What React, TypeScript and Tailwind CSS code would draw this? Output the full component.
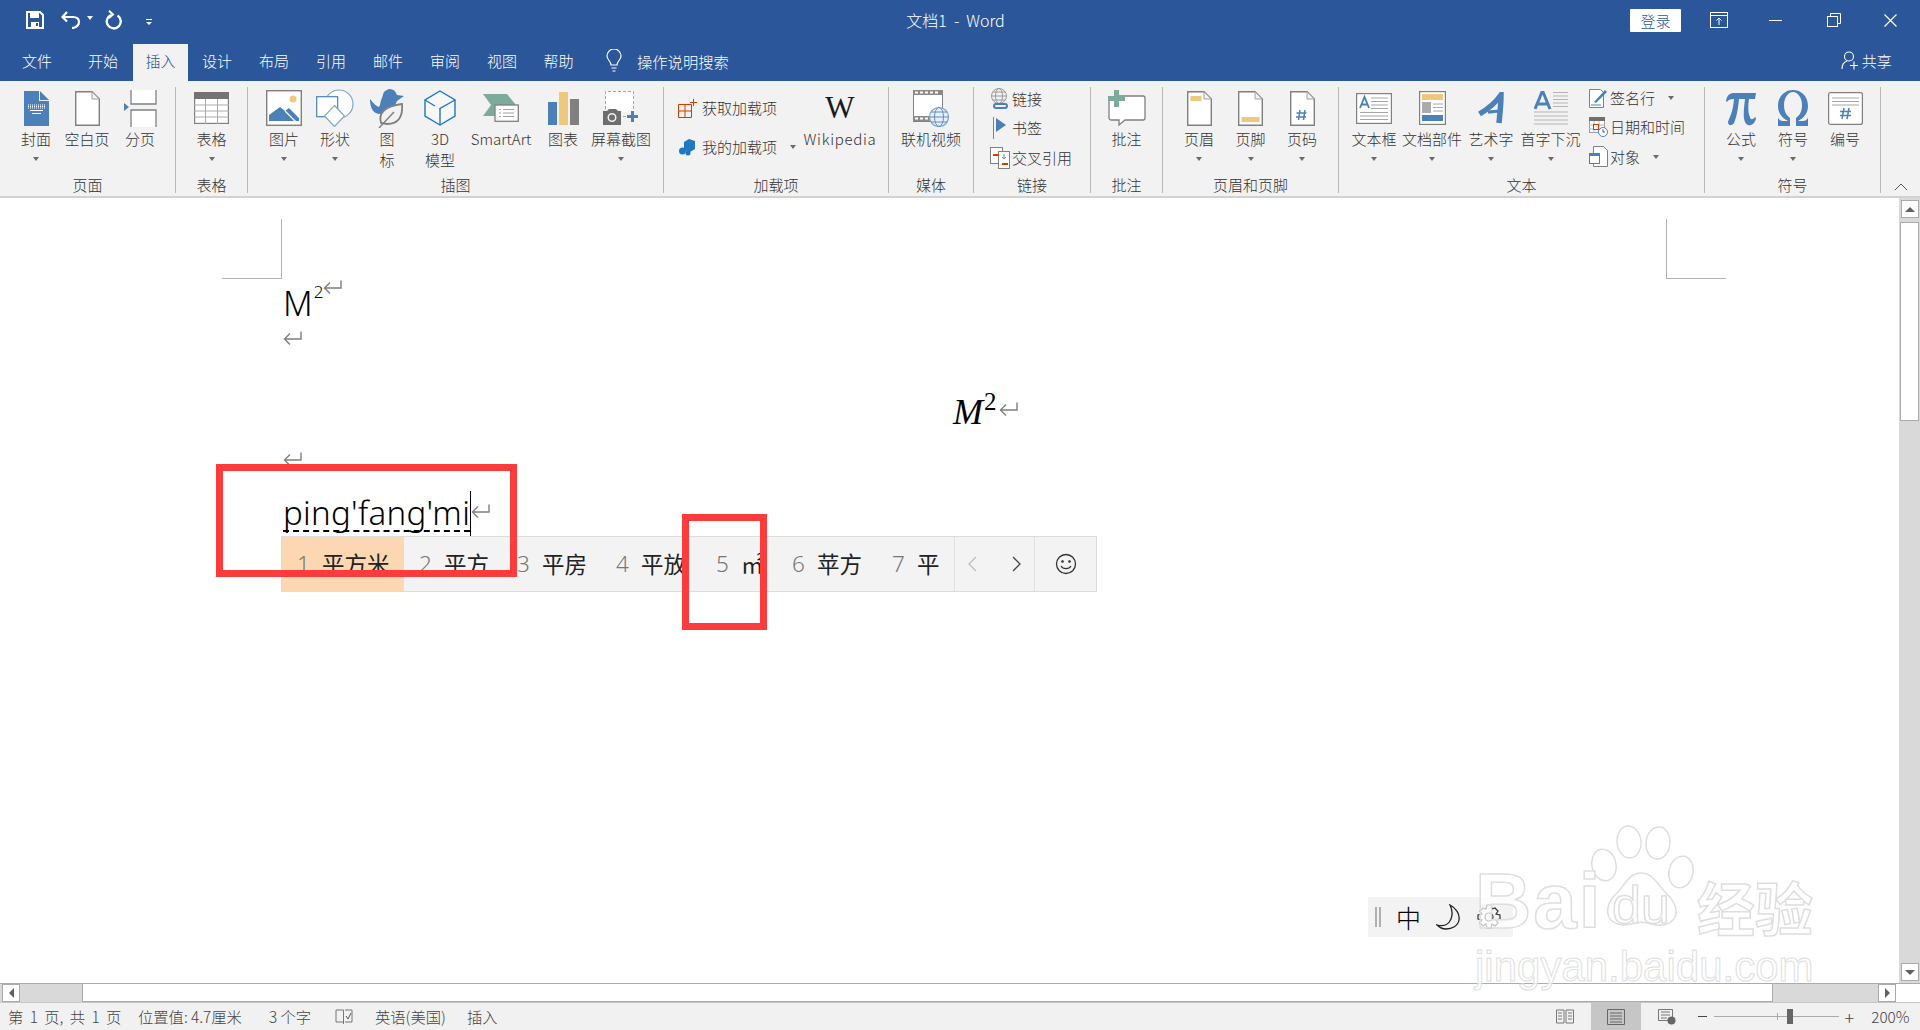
import React from "react";

const BLUE = "#4c80b9";
const TAN = "#edc87e";
const GREY = "#808080";

const Caret = () => <span className="block w-0 h-0 border-l-[3.5px] border-r-[3.5px] border-t-[4px] border-l-transparent border-r-transparent border-t-[#6a6a6a]" />;

// folded page outline used by several ribbon icons
const Page = ({ children }: { children?: React.ReactNode }) => (
  <svg width="25" height="35" viewBox="0 0 25 35">
    <path d="M0.700 0.700h16.300l7.300 7.300v26.300H0.700z" fill="#fff" stroke={GREY} strokeWidth="1.400" />
    <path d="M17 0.700v7.300h7.300z" fill="#f2f2f2" stroke="#a0a0a0" />
    {children}
  </svg>
);

const icons: Record<string, React.ReactNode> = {
  cover: (
    <svg width="25" height="35" viewBox="0 0 25 35">
      <path d="M0 0h15v10h10v25H0z" fill={BLUE} />
      <path d="M16 0l9 9h-9z" fill={BLUE} />
      <path d="M4 14h17M4 15.500h17M4 17h17" stroke="#fff" strokeDasharray="1 1" />
      <path d="M6 19.500h13M8 22.500h9" stroke="#fff" />
    </svg>
  ),
  blank: <Page />,
  pagebreak: (
    <svg width="33" height="37" viewBox="0 0 33 37">
      <path d="M7 0v14h25V0" fill="#fff" stroke={GREY} strokeWidth="1.300" />
      <path d="M7 37V20h25v17" fill="#fff" stroke={GREY} strokeWidth="1.300" />
      <path d="M0 13l5 4-5 4z" fill={BLUE} />
    </svg>
  ),
  table: (
    <svg width="35" height="32" viewBox="0 0 35 32">
      <rect x="0.600" y="0.600" width="33.800" height="30.800" fill="#fff" stroke={GREY} strokeWidth="1.200" />
      <rect x="0" y="0" width="35" height="7" fill="#737373" />
      <path d="M0 13h35M0 19h35M0 25h35M11.500 7v25M23.500 7v25" stroke="#ababab" />
    </svg>
  ),
  picture: (
    <svg width="36" height="36" viewBox="0 0 36 36">
      <rect x="0.700" y="0.700" width="34.600" height="34.600" fill="#fff" stroke={GREY} strokeWidth="1.400" />
      <path d="M3 31V25l11-8 5 4 4-3 10 10v3z" fill={BLUE} />
      <path d="M19 21l11 11" stroke="#fff" strokeWidth="1.200" />
      <circle cx="27" cy="9" r="3.500" fill={TAN} />
    </svg>
  ),
  shapes: (
    <svg width="38" height="38" viewBox="0 0 38 38">
      <circle cx="23" cy="15" r="14" fill="#fff" stroke="#7ea6cf" strokeWidth="1.200" />
      <rect x="0.700" y="7.700" width="21" height="20" fill="#fff" stroke={BLUE} strokeWidth="1.200" />
      <path d="M18.500 16.500l10 10.500-10 10.500L8.500 27z" fill="#fff" stroke="#7ea6cf" strokeWidth="1.200" />
    </svg>
  ),
  iconpic: (
    <svg width="35" height="39" viewBox="0 0 35 39">
      <path d="M0 10c3 4 6 7 9 8 2-3 1-6 3-9C14 4 12 3 19 0c6 0 7 4 8 6l7 1-7 5c-2 6-7 9-13 11l-4 2C4 25 0 20 0 10z" fill={BLUE} />
      <path d="M11 34c-3-10 4-17 21-19 1 12-3 20-15 20z" fill="#f2f2f2" stroke={GREY} strokeWidth="1.800" />
      <path d="M9 39l15-16" stroke={GREY} strokeWidth="1.500" />
    </svg>
  ),
  cube: (
    <svg width="32" height="36" viewBox="0 0 32 36" fill="none" stroke="#1f78c1" strokeWidth="1.400">
      <path d="M16 1l15 9v16L16 35 1 26V10z" fill="#f7f7f7" />
      <path d="M1 10l10 6M31 10l-15 8.500V35" />
    </svg>
  ),
  smartart: (
    <svg width="36" height="29" viewBox="0 0 36 29">
      <path d="M0 0h24l9 11H12v11H0l8-11z" fill="#7dab9a" />
      <rect x="12" y="11" width="23.300" height="16.300" fill="#fff" stroke={GREY} strokeWidth="1.300" />
      <path d="M16 15.500h2M20 15.500h11M16 19h2M20 19h11M16 22.500h2M20 22.500h11" stroke="#a0a0a0" />
    </svg>
  ),
  chart: (
    <svg width="31" height="33" viewBox="0 0 31 33">
      <rect x="0" y="10" width="9" height="23" fill={BLUE} />
      <rect x="11" y="0" width="9" height="33" fill={TAN} />
      <rect x="22" y="7" width="9" height="26" fill={GREY} />
    </svg>
  ),
  shot: (
    <svg width="36" height="34" viewBox="0 0 36 34">
      <path d="M2.500 18V0.500h28v21" fill="#fff" stroke="#a6a6a6" strokeDasharray="3 2" />
      <path d="M0 20h4l2-2h7l2 2h3v14H0z" fill="#6e6e6e" />
      <circle cx="9" cy="26.500" r="3.800" fill="#6e6e6e" stroke="#f2f2f2" strokeWidth="1.500" />
      <rect x="24" y="24" width="11" height="3" fill={BLUE} />
      <rect x="28" y="20" width="3" height="11" fill={BLUE} />
      <path d="M20 25.500h3" stroke="#a6a6a6" />
    </svg>
  ),
  video: (
    <svg width="36" height="37" viewBox="0 0 36 37">
      <rect x="0.500" y="0.500" width="29" height="31" fill="#fff" stroke={GREY} />
      <rect x="0" y="0" width="30" height="5" fill="#8a8a8a" />
      <rect x="0" y="26" width="30" height="5" fill="#8a8a8a" />
      <path d="M2 2.500h3M7 2.500h3M12 2.500h3M17 2.500h3M22 2.500h3M2 28.500h3M7 28.500h3M12 28.500h3" stroke="#fff" strokeWidth="2" />
      <circle cx="26" cy="27" r="9.500" fill="#e8eff6" stroke="#7ea6cf" strokeWidth="1.200" />
      <ellipse cx="26" cy="27" rx="4.500" ry="9.500" fill="none" stroke="#5f8fc0" />
      <path d="M16.500 27h19M18 22h16M18 32h16" stroke="#5f8fc0" />
    </svg>
  ),
  comment: (
    <svg width="38" height="36" viewBox="0 0 38 36">
      <path d="M8 6h27a2 2 0 012 2v20a2 2 0 01-2 2H17l-6 5v-5H3a2 2 0 01-2-2V10" fill="#fff" stroke={GREY} strokeWidth="1.300" />
      <rect x="6" y="0" width="5" height="17" fill="#7dab9a" />
      <rect x="0" y="6" width="17" height="5" fill="#7dab9a" />
    </svg>
  ),
  header: (
    <Page>
      <rect x="3.500" y="5" width="11" height="5" fill={TAN} />
    </Page>
  ),
  footer: (
    <Page>
      <rect x="3.500" y="26" width="18" height="5" fill={TAN} />
    </Page>
  ),
  pagenum: (
    <Page>
      <path d="M10 19l-1.500 10M15 19l-1.500 10M6.500 22h10M6 26h10" stroke={BLUE} strokeWidth="1.500" />
    </Page>
  ),
  textbox: (
    <svg width="36" height="31" viewBox="0 0 36 31">
      <rect x="0.600" y="0.600" width="34.800" height="29.800" fill="#fff" stroke={GREY} strokeWidth="1.200" />
      <path d="M4 15l4.500-11L13 15M5.500 11.500h6" fill="none" stroke={BLUE} strokeWidth="1.800" />
      <path d="M15 5h17M15 8.500h17M15 12h17M15 15.500h17M4 19.500h28M4 23h28M4 26.500h28" stroke="#a6a6a6" />
    </svg>
  ),
  parts: (
    <svg width="27" height="34" viewBox="0 0 27 34">
      <rect x="0.600" y="0.600" width="25.800" height="32.800" fill="#fff" stroke={GREY} strokeWidth="1.200" />
      <rect x="3" y="3" width="21" height="6" fill={TAN} />
      <rect x="3" y="11" width="9" height="11" fill="#ababab" />
      <path d="M14 13h10M14 16.500h10M14 20h10" stroke="#a6a6a6" />
      <rect x="3" y="24" width="21" height="6" fill={BLUE} />
    </svg>
  ),
  wordart: (
    <svg width="27" height="33" viewBox="0 0 27 33" fill="none" stroke={BLUE} strokeWidth="5.500">
      <path d="M1.500 22C10 17 18 10 23 3c0 9-1 18-2 28" />
      <path d="M10 20c4 0 8-1 12-1" strokeWidth="3" />
    </svg>
  ),
  dropcap: (
    <svg width="34" height="34" viewBox="0 0 34 34">
      <path d="M1 18L8 1h1l7 17M3.500 13h11" fill="none" stroke={BLUE} strokeWidth="3" />
      <path d="M19 1.500h15M19 5h15M19 8.500h15M19 12h15M19 15.500h15M0 21h34M0 25h34M0 29h34M0 33h34" stroke="#b5b5b5" />
    </svg>
  ),
  equation: (
    <svg width="32" height="36" viewBox="0 0 32 36">
      <path d="M1 11C2 5 5 3 9 3h22l-1 6h-6c-1 7-1 14 1 18 0 3 3 3 5 0l1 1c-1 6-5 8-8 7-5-2-5-10-3-26h-6c-1 11-3 20-5 24-2 3-6 3-6-1 1-4 5-9 6-23-4 0-6 1-7 3z" fill={BLUE} />
    </svg>
  ),
  omega: (
    <svg width="32" height="38" viewBox="0 0 32 38">
      <path d="M1 37v-7c0-1 1-1 1 0 1 2 3 2 9 2-6-3-10-8-10-15C1 7 8 1 16 1s15 6 15 16c0 7-4 12-10 15 6 0 8 0 9-2 0-1 1-1 1 0v7H19v-8c4-3 6-7 6-13 0-7-4-13-9-13S7 9 7 16c0 6 2 10 6 13v8z" fill={BLUE} />
    </svg>
  ),
  numbering: (
    <svg width="35" height="33" viewBox="0 0 35 33">
      <rect x="0.600" y="0.600" width="33.800" height="31.800" rx="2" fill="#fff" stroke={GREY} strokeWidth="1.200" />
      <path d="M4 6h27M4 9.500h27M4 13h27" stroke="#a6a6a6" />
      <path d="M16 16l-2 11M21 16l-2 11M12 19.500h11M12 23.500h11" stroke={BLUE} strokeWidth="1.500" />
    </svg>
  ),
};

const small: Record<string, React.ReactNode> = {
  store: (
    <svg width="19" height="19" viewBox="0 0 19 19" fill="none" stroke="#d83b01">
      <path d="M0.500 5.500h13v13H0.500zM0.500 12h13M7 5.500v13" />
      <path d="M15.500 0v7M12 3.500h7" />
    </svg>
  ),
  myaddin: (
    <svg width="17" height="20" viewBox="0 0 17 20">
      <path d="M10 2l6 2v8l-5 3-6-2V5z" fill="#1f78c1" />
      <circle cx="3.500" cy="14" r="3.500" fill="#1f78c1" />
      <circle cx="9" cy="16" r="2.500" fill="#1f78c1" />
    </svg>
  ),
  link: (
    <svg width="20" height="22" viewBox="0 0 20 22">
      <circle cx="9" cy="8" r="7.500" fill="#f2f2f2" stroke="#9a9a9a" />
      <ellipse cx="9" cy="8" rx="3.500" ry="7.500" fill="none" stroke="#9a9a9a" />
      <path d="M1.500 8h15M3 4h12M3 12h12" stroke="#9a9a9a" />
      <path d="M6 18h9" stroke={BLUE} strokeWidth="6" strokeLinecap="round" />
      <path d="M6 18h9" stroke="#f2f2f2" strokeWidth="2" strokeLinecap="round" />
    </svg>
  ),
  bookmark: (
    <svg width="14" height="22" viewBox="0 0 14 22">
      <path d="M0.500 0v22" stroke={GREY} />
      <path d="M3 1l10 7-10 7z" fill={BLUE} />
    </svg>
  ),
  crossref: (
    <svg width="20" height="22" viewBox="0 0 20 22">
      <rect x="0.500" y="0.500" width="12" height="16" fill="#fff" stroke={GREY} />
      <rect x="8.500" y="4.500" width="11" height="17" fill="#fff" stroke={GREY} />
      <rect x="3" y="7" width="6" height="2" fill="#d83b01" />
      <rect x="12" y="16" width="6" height="2" fill="#d83b01" />
      <path d="M14 7v5M12 10l2 2 2-2" stroke={GREY} fill="none" />
    </svg>
  ),
  signature: (
    <svg width="19" height="20" viewBox="0 0 19 20">
      <path d="M0.500 1.500h11l3 3v15H0.500z" fill="#fff" stroke={GREY} />
      <path d="M5 14L16 2l2 2L7 15z" fill={BLUE} />
      <path d="M2 17h10" stroke={BLUE} />
    </svg>
  ),
  date: (
    <svg width="19" height="20" viewBox="0 0 19 20">
      <rect x="0.500" y="0.500" width="15" height="15" fill="#fff" stroke="#9a9a9a" />
      <rect x="0" y="0" width="16" height="4" fill="#6f6f6f" />
      <path d="M0 8h16M0 12h16M5 4v12M10 4v12" stroke="#b5b5b5" />
      <rect x="4.500" y="7.500" width="5" height="5" fill="#fff" stroke="#d83b01" />
      <circle cx="14" cy="15" r="4.500" fill="#fff" stroke={BLUE} />
      <path d="M14 12.500V15h2" stroke="#555" fill="none" />
    </svg>
  ),
  object: (
    <svg width="19" height="21" viewBox="0 0 19 21">
      <path d="M4.500 0.500h10l4 4v16h-14z" fill="#fff" stroke={GREY} />
      <rect x="0.500" y="7.500" width="10" height="10" fill="#fff" stroke={BLUE} />
      <rect x="0" y="7" width="11" height="3" fill={BLUE} />
    </svg>
  ),
};

const Btn = ({ w, icon, label, label2, caret }: { w: string; icon: string; label: string; label2?: string; caret?: boolean }) => (
  <div className={`flex flex-col items-center shrink-0 ${w}`}>
    <div className="h-[38px] mt-[8px] flex items-center justify-center">{icons[icon]}</div>
    <div className="h-[20px] mt-[1.500px] leading-[20px] whitespace-nowrap">{label}</div>
    <div className="h-[19.500px] mt-[1px] leading-[19.500px] flex items-center whitespace-nowrap">{label2}{caret && <Caret />}</div>
  </div>
);

const Group = ({ w, label, pl, children }: { w: string; label: string; pl?: string; children: React.ReactNode }) => (
  <>
    <div className={`flex flex-col shrink-0 h-full ${w}`}>
      <div className={`flex h-[94px] ${pl ?? ""}`}>{children}</div>
      <div className="flex-1 flex items-center justify-center pt-[1.500px]">{label}</div>
    </div>
    <div className="w-px shrink-0 bg-[#b8b8b8] mt-[6px] mb-[3px]" />
  </>
);

const SmallRow = ({ icon, label, caret, iconW = "w-[24px]" }: { icon: string; label: string; caret?: string; iconW?: string }) => (
  <div className="flex items-center h-[29.500px] whitespace-nowrap">
    <div className={`flex justify-center shrink-0 ${iconW}`}>{small[icon]}</div>
    <span>{label}</span>
    {caret && <span className={caret}><Caret /></span>}
  </div>
);

const tabs = [
  ["开始", "w-[60px]"],
  ["插入", "w-[55px]"],
  ["设计", "w-[58px]"],
  ["布局", "w-[56px]"],
  ["引用", "w-[58px]"],
  ["邮件", "w-[56px]"],
  ["审阅", "w-[58px]"],
  ["视图", "w-[56px]"],
  ["帮助", "w-[57px]"],
];

const Return = ({ className = "" }: { className?: string }) => (
  <svg width="19" height="16" viewBox="0 0 19 16" className={className} fill="none" stroke="#7f7f7f" strokeWidth="1.400">
    <path d="M18 0.500V8H1.500M7 2.500L1.500 8 7 13.500" />
  </svg>
);

const candidates = [
  ["2", "平方", "w-[98px]"],
  ["3", "平房", "w-[99px]"],
  ["4", "平放", "w-[100px]"],
  ["5", "㎡", "w-[76px]"],
  ["6", "苹方", "w-[100px]"],
  ["7", "平", "w-[77px]"],
];

const ScrollBtn = ({ dir }: { dir: "up" | "down" | "left" | "right" }) => (
  <div className="w-[18px] h-[18px] shrink-0 bg-white border border-[#ababab] flex items-center justify-center">
    {dir === "up" && <span className="w-0 h-0 border-l-[5px] border-r-[5px] border-b-[5px] border-l-transparent border-r-transparent border-b-[#606060]" />}
    {dir === "down" && <span className="w-0 h-0 border-l-[5px] border-r-[5px] border-t-[5px] border-l-transparent border-r-transparent border-t-[#606060]" />}
    {dir === "left" && <span className="w-0 h-0 border-t-[5px] border-b-[5px] border-r-[5px] border-t-transparent border-b-transparent border-r-[#606060]" />}
    {dir === "right" && <span className="w-0 h-0 border-t-[5px] border-b-[5px] border-l-[5px] border-t-transparent border-b-transparent border-l-[#606060]" />}
  </div>
);

const Watermark = () => (
  <div className="absolute left-[1475px] top-[825px] w-[350px] h-[168px] text-white/70 [-webkit-text-stroke:1.5px_#dedede] font-['Liberation_Sans',sans-serif] pointer-events-none">
    <svg width="104" height="105" viewBox="0 0 104 105" className="absolute left-[116px] top-0" fill="#ffffff66" stroke="#dedede" strokeWidth="1.500">
      <ellipse cx="13" cy="40" rx="12" ry="16" transform="rotate(-12 13 40)" />
      <ellipse cx="38" cy="17" rx="12" ry="16" transform="rotate(-6 38 17)" />
      <ellipse cx="67" cy="18" rx="12" ry="16" transform="rotate(6 67 18)" />
      <ellipse cx="90" cy="47" rx="12" ry="16" transform="rotate(12 90 47)" />
      <path d="M50 48c-12 0-16 12-24 20-9 8-11 18-8 24 4 8 14 9 22 7 6-2 14-2 20 0 10 3 20 1 24-7 3-7-1-16-9-24-8-8-13-20-25-20z" />
    </svg>
    <div className="absolute left-0 top-[37px] text-[78px] leading-[78px] font-bold tracking-[2px]">Bai</div>
    <div className="absolute left-[137px] top-[54px] text-[52px] leading-[52px]">du</div>
    <div className="absolute left-[222px] top-[50px] text-[58px] leading-[62px] font-bold font-['Noto_Sans_CJK_SC',sans-serif] whitespace-nowrap">经验</div>
    <div className="absolute left-0 top-[118px] text-[42px] leading-[48px] [-webkit-text-stroke:1px_#dedede] whitespace-nowrap">jingyan.baidu.com</div>
  </div>
);

export default function App() {
  return (
    <div className="relative w-[1920px] h-[1030px] overflow-hidden flex flex-col bg-white text-[15px] text-[#333] font-light font-['Noto_Sans_CJK_SC',sans-serif]">
      {/* title bar */}
      <div className="h-[81px] shrink-0 bg-[#2b579a] text-white flex flex-col">
        <div className="h-[44px] flex items-center relative pb-[4px]">
          <svg width="18" height="18" viewBox="0 0 18 18" className="ml-[26px]">
            <path d="M1 1h13l3 3v13H1z" fill="none" stroke="#fff" strokeWidth="2" />
            <rect x="4" y="1" width="9" height="6" fill="#fff" />
            <rect x="5" y="11" width="8" height="6" fill="#fff" />
            <rect x="10" y="12" width="2" height="3" fill="#2b579a" />
          </svg>
          <svg width="20" height="18" viewBox="0 0 20 18" className="ml-[17px]" fill="none" stroke="#fff" strokeWidth="2.200">
            <path d="M6 1L1.500 6 6 10.500" />
            <path d="M2 6h10c4 0 6 2 6 5s-3 6-7 6" />
          </svg>
          <span className="ml-[6px] mb-[4px]"><span className="block w-0 h-0 border-l-[3.5px] border-r-[3.5px] border-t-[4px] border-l-transparent border-r-transparent border-t-white" /></span>
          <svg width="18" height="20" viewBox="0 0 18 20" className="ml-[12px]" fill="none" stroke="#fff" strokeWidth="2.400">
            <path d="M12.500 5.500A7 7 0 1 1 6 5" />
            <path d="M4 0.800L8 4.500 4 8" strokeWidth="2" />
          </svg>
          <span className="ml-[23px] flex flex-col items-center gap-[2px] mt-[3px]">
            <span className="block w-[6px] h-px bg-white" />
            <span className="block w-0 h-0 border-l-[3px] border-r-[3px] border-t-[3px] border-l-transparent border-r-transparent border-t-white" />
          </span>
          <div className="ml-[752px] w-[103px] flex justify-center text-[16px] whitespace-nowrap">文档1 &nbsp;-&nbsp; Word</div>
          <div className="ml-[623px] w-[51px] h-[23px] bg-white rounded-[1px] text-[#2b579a] text-[15px] leading-[23px] text-center">登录</div>
          <svg width="18" height="16" viewBox="0 0 18 16" className="ml-[29px]" fill="none" stroke="#fff">
            <rect x="0.500" y="0.500" width="17" height="15" />
            <path d="M0 3.500h18M9 13V6M6.500 8.500L9 6l2.500 2.500" />
          </svg>
          <div className="ml-[41px] w-[13px] h-px bg-white" />
          <svg width="14" height="14" viewBox="0 0 14 14" className="ml-[45px]" fill="none" stroke="#fff">
            <path d="M3.500 3V0.500h10v10H11" />
            <rect x="0.500" y="3.500" width="10" height="10" />
          </svg>
          <svg width="13" height="13" viewBox="0 0 13 13" className="ml-[43px]" stroke="#fff" strokeWidth="1.200">
            <path d="M0.500 0.500l12 12M12.500 0.500l-12 12" />
          </svg>
        </div>
        <div className="flex-1 flex text-[15px] font-light">
          <div className="w-[58px] ml-[8px] text-center leading-[34px]">文件</div>
          <div className="w-[7px]" />
          {tabs.map(([t, w]) => (
            <div key={t} className={`${w} text-center leading-[34px] ${t === "插入" ? "bg-[#f2f2f2] text-[#2b579a]" : ""}`}>{t}</div>
          ))}
          <svg width="16" height="24" viewBox="0 0 16 24" className="ml-[19px] mt-[5px]" fill="none" stroke="#fff" strokeWidth="1.200">
            <path d="M5 16c0-4-4-5-4-9a7 7 0 0114 0c0 4-4 5-4 9z" />
            <path d="M5.500 19h5M6.500 22h3" />
          </svg>
          <div className="ml-[15px] leading-[34px] text-[15.300px] whitespace-nowrap">操作说明搜索</div>
          <svg width="18" height="20" viewBox="0 0 18 20" className="ml-[1112px] mt-[7px]" fill="none" stroke="#fff" strokeWidth="1.100">
            <circle cx="8" cy="5.500" r="4.500" />
            <path d="M1 18c0-5 2-7 5-8M13 10.500v8M9 14.500h8" />
          </svg>
          <div className="ml-[3px] leading-[34px] whitespace-nowrap">共享</div>
        </div>
      </div>

      {/* ribbon */}
      <div className="h-[117px] shrink-0 bg-[#f2f2f2] border-b-2 border-[#d2d2d2] flex">
        <Group w="w-[175px]" label="页面" pl="pl-[10px]">
          <Btn w="w-[52px]" icon="cover" label="封面" caret />
          <Btn w="w-[50px]" icon="blank" label="空白页" />
          <Btn w="w-[56px]" icon="pagebreak" label="分页" />
        </Group>
        <Group w="w-[71px]" label="表格">
          <Btn w="w-[71px]" icon="table" label="表格" caret />
        </Group>
        <Group w="w-[415px]" label="插图" pl="pl-[10px]">
          <Btn w="w-[52px]" icon="picture" label="图片" caret />
          <Btn w="w-[50px]" icon="shapes" label="形状" caret />
          <Btn w="w-[54px]" icon="iconpic" label="图" label2="标" />
          <Btn w="w-[52px]" icon="cube" label="3D" label2="模型" />
          <Btn w="w-[70px]" icon="smartart" label="SmartArt" />
          <Btn w="w-[54px]" icon="chart" label="图表" />
          <Btn w="w-[62px]" icon="shot" label="屏幕截图" caret />
        </Group>
        <Group w="w-[224px]" label="加载项" pl="pl-[14px]">
          <div className="w-[126px] pt-[12px] shrink-0">
            <div className="flex items-center h-[30px] whitespace-nowrap">
              <div className="w-[24px] flex justify-start">{small.store}</div>
              <span>获取加载项</span>
            </div>
            <div className="flex items-center h-[30px] mt-[9px] whitespace-nowrap">
              <div className="w-[24px] pl-[1px]">{small.myaddin}</div>
              <span>我的加载项</span>
              <span className="ml-[13px]"><Caret /></span>
            </div>
          </div>
          <div className="w-[72px] flex flex-col items-center">
            <div className="mt-[8px] h-[38px] flex items-center font-['Liberation_Serif',serif] font-normal text-[#1a1a1a] text-[31px] leading-[38px]">W</div>
            <div className="mt-[1.500px] leading-[20px] tracking-[0.700px]">Wikipedia</div>
          </div>
        </Group>
        <Group w="w-[84px]" label="媒体">
          <Btn w="w-[84px]" icon="video" label="联机视频" />
        </Group>
        <Group w="w-[116px]" label="链接" pl="pl-[14px] pt-[3px]">
          <div>
            <SmallRow icon="link" label="链接" />
            <SmallRow icon="bookmark" label="书签" />
            <SmallRow icon="crossref" label="交叉引用" />
          </div>
        </Group>
        <Group w="w-[71px]" label="批注">
          <Btn w="w-[71px]" icon="comment" label="批注" />
        </Group>
        <Group w="w-[175px]" label="页眉和页脚" pl="pl-[10px]">
          <Btn w="w-[52px]" icon="header" label="页眉" caret />
          <Btn w="w-[51px]" icon="footer" label="页脚" caret />
          <Btn w="w-[52px]" icon="pagenum" label="页码" caret />
        </Group>
        <Group w="w-[365px]" label="文本" pl="pl-[6px]">
          <Btn w="w-[58px]" icon="textbox" label="文本框" caret />
          <Btn w="w-[58px]" icon="parts" label="文档部件" caret />
          <Btn w="w-[60px]" icon="wordart" label="艺术字" caret />
          <Btn w="w-[59px]" icon="dropcap" label="首字下沉" caret />
          <div className="ml-[6px] pt-[2px]">
            <SmallRow icon="signature" label="签名行" caret="ml-[13px]" />
            <SmallRow icon="date" label="日期和时间" />
            <SmallRow icon="object" label="对象" caret="ml-[13px]" />
          </div>
        </Group>
        <Group w="w-[175px]" label="符号" pl="pl-[10px]">
          <Btn w="w-[52px]" icon="equation" label="公式" caret />
          <Btn w="w-[52px]" icon="omega" label="符号" caret />
          <Btn w="w-[52px]" icon="numbering" label="编号" />
        </Group>
        <div className="flex-1 flex items-end justify-center pb-[5px]">
          <svg width="14" height="8" viewBox="0 0 14 8" fill="none" stroke="#555"><path d="M1 7l6-6 6 6" /></svg>
        </div>
      </div>

      {/* document */}
      <div className="flex-1 flex min-h-0">
        <div className="flex-1 relative overflow-hidden text-black">
          <div className="flex pt-[21px]">
            <div className="ml-[222px] w-[60px] h-[60px] border-r border-b border-[#b0b0b0]" />
            <div className="ml-[1384px] w-[60px] h-[60px] border-l border-b border-[#b0b0b0]" />
          </div>
          <div className="pl-[283px] font-['Noto_Sans',sans-serif] font-light">
            {/* M2 */}
            <div className="flex items-start h-[52px]">
              <span className="text-[34px] leading-[44px] mt-[1px] scale-y-105">M</span>
              <span className="text-[17px] leading-[20px] mt-[3px] ml-[1px]">2</span>
              <Return className="ml-[0px] mt-[1px]" />
            </div>
            <Return />
            {/* centered equation */}
            <div className="flex items-start h-[105px] pl-[670px] pt-[46px] font-['Liberation_Serif',serif] italic font-normal">
              <span className="text-[36px] leading-[38px]">M</span>
              <span className="text-[25px] leading-[26px] not-italic ml-[1px] -mt-[4px]">2</span>
              <Return className="ml-[2px] mt-[9px]" />
            </div>
            <Return />
            {/* composing text */}
            <div className="flex items-start h-[70px] mt-[23px]">
              <span className="text-[33px] leading-[42px] mt-[1px] border-b-2 border-dashed border-black h-[40px] tracking-[0.3px] whitespace-nowrap">ping'fang'mi</span>
              <span className="w-px h-[45px] bg-black" />
              <Return className="mt-[13px]" />
            </div>
          </div>

          {/* IME candidate window */}
          <div className="absolute left-[281px] top-[338px] w-[816px] h-[56px] flex bg-[#f3f3f3] border border-[#dcdcdc] text-[22.500px] text-[#222] font-normal whitespace-nowrap">
            <div className="w-[122px] bg-[#fdd7b2] flex items-center pl-[15px]">
              <span className="w-[25px] text-[#777] font-light font-['Noto_Sans',sans-serif]">1</span>平方米
            </div>
            {candidates.map(([n, t, w]) => (
              <div key={n} className={`${w} flex items-center pl-[15px]`}>
                <span className="w-[25px] text-[#777] font-light font-['Noto_Sans',sans-serif]">{n}</span>{t}
              </div>
            ))}
            <div className="w-[81px] flex items-center justify-between px-[13px] border-l border-r border-[#e0e0e0]">
              <svg width="9" height="16" viewBox="0 0 9 16" fill="none" stroke="#bdbdbd" strokeWidth="1.300"><path d="M8 1L1 8l7 7" /></svg>
              <svg width="9" height="16" viewBox="0 0 9 16" fill="none" stroke="#444" strokeWidth="1.300"><path d="M1 1l7 7-7 7" /></svg>
            </div>
            <div className="flex-1 flex items-center justify-center">
              <svg width="22" height="22" viewBox="0 0 22 22" fill="none" stroke="#333" strokeWidth="1.300">
                <circle cx="11" cy="11" r="9.500" />
                <circle cx="7.500" cy="8.500" r="0.700" fill="#333" />
                <circle cx="14.500" cy="8.500" r="0.700" fill="#333" />
                <path d="M6 13c2 3.500 8 3.500 10 0" />
              </svg>
            </div>
          </div>

          {/* red annotation boxes */}
          <div className="absolute left-[216px] top-[266px] w-[301px] h-[113px] border-[7px] border-[#fc3b3c]" />
          <div className="absolute left-[682px] top-[316px] w-[85px] h-[116px] border-[7px] border-[#fc3b3c]" />

          {/* IME status bar */}
          <div className="absolute left-[1368px] top-[699px] w-[145px] h-[40px] bg-[#f3f3f3] flex items-center text-black">
            <span className="ml-[7px] w-[6px] h-[20px] border-l-2 border-r-2 border-[#b0b0b0]" />
            <span className="ml-[15px] text-[25px] font-light leading-none">中</span>
            <svg width="25" height="26" viewBox="0 0 25 26" className="ml-[15px]" fill="none" stroke="#222" strokeWidth="1.300">
              <path d="M14 1c6 3 10 9 9 15-1 6-7 9-13 9-4 0-7-2-9-4 7 2 12-1 14-6 2-5 1-10-1-14z" />
            </svg>
            <svg width="26" height="26" viewBox="0 0 26 26" className="ml-[15px]" fill="none" stroke="#333" strokeWidth="1.200">
              <circle cx="13" cy="13" r="4" />
              <path d="M11 1h4l1 4 3-1 3 3-2 3 4 1v4l-4 1 2 3-3 3-3-2-1 4h-4l-1-4-3 2-3-3 2-3-4-1v-4l4-1-2-3 3-3 3 1z" />
            </svg>
          </div>
        </div>

        {/* vertical scrollbar */}
        <div className="w-[21px] shrink-0 flex flex-col items-center pt-[2px] pb-[2px] bg-[#d9d9d9]">
          <ScrollBtn dir="up" />
          <div className="w-full h-[4px] shrink-0" />
          <div className="w-[19px] h-[199px] bg-white border border-[#ababab] shrink-0" />
          <div className="flex-1" />
          <ScrollBtn dir="down" />
        </div>
      </div>

      {/* horizontal scrollbar */}
      <div className="h-[19px] shrink-0 flex items-center bg-[#d9d9d9] border-t border-[#ababab]">
        <div className="ml-[2px]"><ScrollBtn dir="left" /></div>
        <div className="w-[62px]" />
        <div className="w-[1691px] h-full bg-white border-x border-b border-[#ababab]" />
        <div className="w-[105px]" />
        <ScrollBtn dir="right" />
        <div className="flex-1 h-full bg-white" />
      </div>

      {/* status bar */}
      <div className="h-[28px] shrink-0 bg-[#f1f1f1] border-t border-[#c6c6c6] flex items-center text-[15.300px] text-[#444] whitespace-nowrap">
        <span className="ml-[8px] w-[130px] [word-spacing:3px]">第 1 页, 共 1 页</span>
        <span className="w-[131px]">位置值: 4.7厘米</span>
        <span className="w-[66px]">3 个字</span>
        <svg width="18" height="16" viewBox="0 0 18 16" fill="none" stroke="#777">
          <path d="M8.500 1H1v12h8M8.500 1v14" />
          <path d="M10 1h7v12h-7" />
          <path d="M11 7l2 3 3-6" stroke="#555" />
        </svg>
        <span className="ml-[22px] w-[92px]">英语(美国)</span>
        <span>插入</span>
        <svg width="18" height="16" viewBox="0 0 18 16" className="ml-[1058px]" fill="none" stroke="#777">
          <path d="M0.500 1h7.500v13H0.500zM10 1h7.500v13H10zM2 4h4M2 7h4M2 10h4M12 4h4M12 7h4M12 10h4" />
        </svg>
        <div className="ml-[17px] w-[50px] h-full bg-[#c6c6c6] flex items-center justify-center">
          <svg width="18" height="16" viewBox="0 0 18 16" fill="none" stroke="#666">
            <path d="M0.500 0.500h17v15h-17zM3 4h12M3 7h12M3 10h12M3 13h12" />
          </svg>
        </div>
        <svg width="18" height="16" viewBox="0 0 18 16" className="ml-[17px]" fill="none" stroke="#777">
          <path d="M0.500 0.500h14v11h-14zM3 3h9M3 6h9M3 9h6" />
          <circle cx="13.500" cy="11.500" r="4" fill="#666" stroke="none" />
        </svg>
        <div className="ml-[22px] w-[9px] h-px bg-[#444]" />
        <div className="ml-[7px] w-[125px] h-px bg-[#aaa] flex items-center pl-[63px]">
          <span className="w-px h-[7px] bg-[#aaa]" />
          <span className="ml-[9px] w-[6px] h-[15px] bg-[#666]" />
        </div>
        <span className="ml-[6px] text-[18px] leading-none">+</span>
        <span className="ml-[17px]">200%</span>
      </div>

      <Watermark />
    </div>
  );
}
